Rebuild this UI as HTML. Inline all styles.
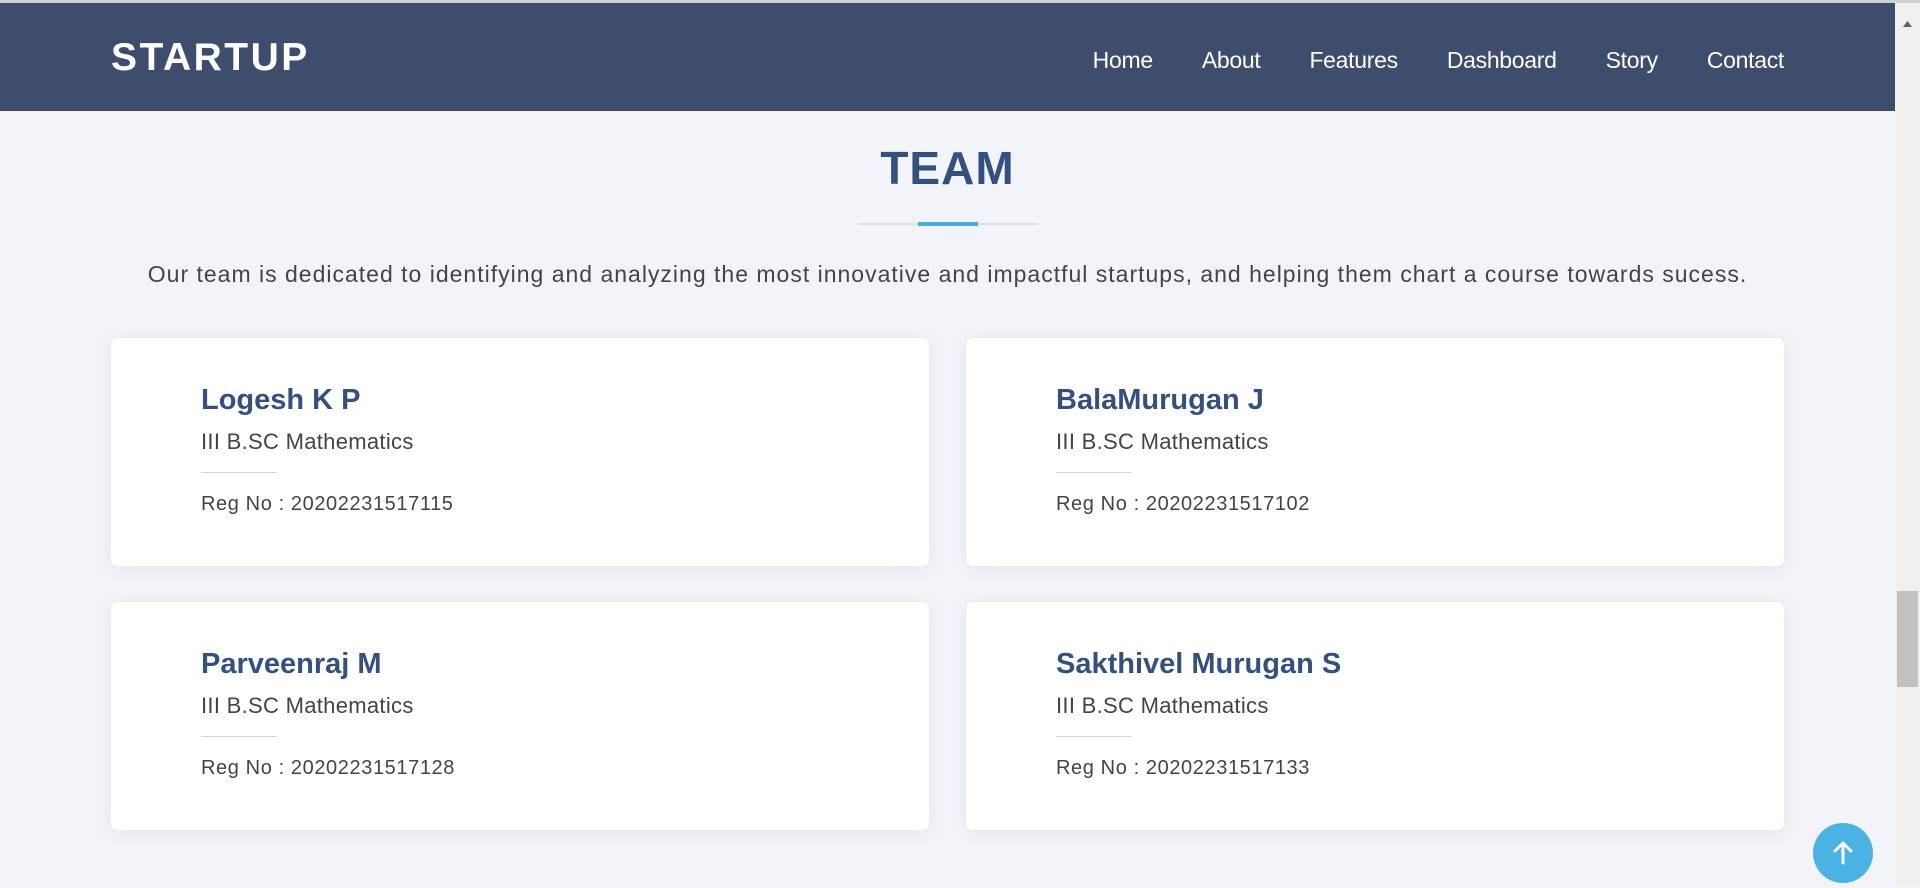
<!DOCTYPE html>
<html><head><meta charset="utf-8"><style>
*{margin:0;padding:0;box-sizing:border-box}
body{width:1920px;height:886px;overflow:hidden;background:#f3f4f9;font-family:"Liberation Sans",sans-serif;position:relative}
.top{position:absolute;left:0;top:0;width:1920px;height:3px;background:#d0d0d0}
.nav{position:absolute;left:0;top:3px;width:1895px;height:108px;background:#3d4d6b}
.logo{position:absolute;left:111px;top:32px;color:#fff;font-size:39px;font-weight:bold;letter-spacing:2.5px;line-height:46px}
.links{position:absolute;right:111px;top:43px;color:#fff;font-size:23px;display:flex;gap:49px;line-height:28px;letter-spacing:-0.3px}
h1{position:absolute;left:0;width:1895px;top:140px;text-align:center;color:#34507f;font-size:46px;line-height:56px;letter-spacing:1px}
.dg{position:absolute;left:858px;top:223px;width:180px;height:2px;background:#dcdde2}
.db{position:absolute;left:918px;top:222px;width:60px;height:4px;background:#46b0e2}
.p{position:absolute;left:0;width:1895px;top:259px;text-align:center;color:#444;font-size:23px;line-height:30px;letter-spacing:1px;white-space:nowrap}
.card{position:absolute;width:818px;height:228px;background:#fff;border-radius:7px;box-shadow:0 2px 18px rgba(60,70,110,.09)}
.card .n{position:absolute;left:90px;top:44px;font-size:29px;font-weight:bold;color:#34507f;line-height:36px}
.card .s{position:absolute;left:90px;top:90px;font-size:22px;color:#444;line-height:28px;letter-spacing:0.3px}
.card .l{position:absolute;left:90px;top:134px;width:76px;height:1px;background:#cdd6e6}
.card .r{position:absolute;left:90px;top:153px;font-size:20px;color:#444;line-height:26px;letter-spacing:0.6px}
.sb{position:absolute;left:1895px;top:3px;width:25px;height:883px;background:#f0f0f0}
.th{position:absolute;left:1897px;top:591px;width:21px;height:96px;background:#c1c1c1}
.btn{position:absolute;left:1813px;top:823px;width:60px;height:60px;border-radius:50%;background:#4ab3e3}
</style></head><body>
<div class="top"></div>
<div class="nav"><div class="logo">STARTUP</div>
<div class="links"><span>Home</span><span>About</span><span>Features</span><span>Dashboard</span><span>Story</span><span>Contact</span></div></div>
<h1>TEAM</h1>
<div class="dg"></div><div class="db"></div>
<div class="p">Our team is dedicated to identifying and analyzing the most innovative and impactful startups, and helping them chart a course towards sucess.</div>
<div class="card" style="left:111px;top:338px"><div class="n">Logesh K P</div><div class="s">III B.SC Mathematics</div><div class="l"></div><div class="r">Reg No : 20202231517115</div></div>
<div class="card" style="left:966px;top:338px"><div class="n">BalaMurugan J</div><div class="s">III B.SC Mathematics</div><div class="l"></div><div class="r">Reg No : 20202231517102</div></div>
<div class="card" style="left:111px;top:602px"><div class="n">Parveenraj M</div><div class="s">III B.SC Mathematics</div><div class="l"></div><div class="r">Reg No : 20202231517128</div></div>
<div class="card" style="left:966px;top:602px"><div class="n">Sakthivel Murugan S</div><div class="s">III B.SC Mathematics</div><div class="l"></div><div class="r">Reg No : 20202231517133</div></div>
<div class="sb"><svg width="25" height="20" style="position:absolute;top:10px;left:0"><path d="M8 14h9l-4.5-6z" fill="#606060"/></svg></div>
<div class="th"></div>
<div class="btn"><svg width="60" height="60"><path d="M30 40V21M22 28l8-8 8 8" stroke="#fff" stroke-width="3" fill="none" stroke-linecap="round" stroke-linejoin="round"/></svg></div>
</body></html>
